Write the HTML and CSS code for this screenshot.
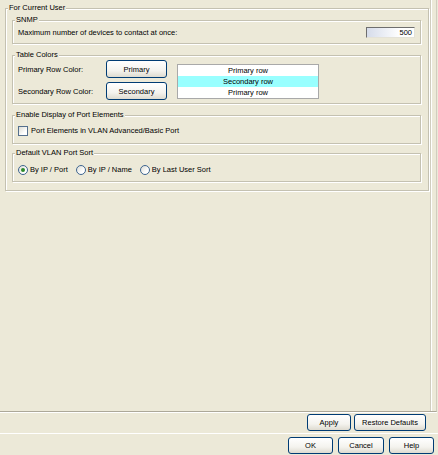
FILE: index.html
```html
<!DOCTYPE html>
<html>
<head>
<meta charset="utf-8">
<link rel="stylesheet" href="styles.css">
</head>
<body>
<div class="main">
  <fieldset class="box outer">
    <legend>For Current User</legend>
    <fieldset class="box group snmp">
      <legend>SNMP</legend>
      <div class="snmp-row">
        <span>Maximum number of devices to contact at once:</span>
        <div class="field">500</div>
      </div>
    </fieldset>
    <fieldset class="box group colors">
      <legend>Table Colors</legend>
      <div class="colors-row">
        <div class="color-grid">
          <span>Primary Row Color:</span>
          <div class="btn btn-color">Primary</div>
          <span>Secondary Row Color:</span>
          <div class="btn btn-color">Secondary</div>
        </div>
        <div class="rows">
          <div class="row">Primary row</div>
          <div class="row secondary">Secondary row</div>
          <div class="row">Primary row</div>
        </div>
      </div>
    </fieldset>
    <fieldset class="box group port">
      <legend>Enable Display of Port Elements</legend>
      <div class="opt-row">
        <span class="chk"></span>
        <span>Port Elements in VLAN Advanced/Basic Port</span>
      </div>
    </fieldset>
    <fieldset class="box group sort">
      <legend>Default VLAN Port Sort</legend>
      <div class="opt-row radios">
        <span class="opt"><span class="radio checked"></span><span>By IP / Port</span></span>
        <span class="opt"><span class="radio"></span><span>By IP / Name</span></span>
        <span class="opt"><span class="radio"></span><span>By Last User Sort</span></span>
      </div>
    </fieldset>
  </fieldset>
</div>
<div class="apply-row">
  <div class="btn btn-apply">Apply</div>
  <div class="btn btn-restore">Restore Defaults</div>
</div>
<div class="sep"></div>
<div class="ok-row">
  <div class="btn btn-dlg">OK</div>
  <div class="btn btn-cancel">Cancel</div>
  <div class="btn btn-dlg">Help</div>
</div>
</body>
</html>
```
FILE: styles.css
```css
html, body {
  margin: 0;
  padding: 0;
}
body {
  width: 438px;
  height: 455px;
  overflow: hidden;
  background: #ECE9D8;
  font-family: "Liberation Sans", Arial, sans-serif;
  font-size: 7.5px;
  color: #000;
}
.main {
  box-sizing: border-box;
  width: 437px;
  height: 412px;
  padding-top: 3px;
  border-bottom: 1px solid #ACA899;
  border-right: 1px solid #D0CDBE;
  box-shadow: 0 1px 0 #fff;
  position: relative;
}
.main::after {
  content: "";
  position: absolute;
  top: 0;
  bottom: 0;
  right: 5px;
  width: 1px;
  background: #D0CDBE;
  box-shadow: 1px 0 0 #fff;
}
.box {
  box-sizing: border-box;
  margin: 0;
  border: 1px solid #C4C1B1;
  box-shadow: inset 1px 1px 0 #fff, 1px 1px 0 #fff;
  min-width: 0;
}
.box > legend {
  padding: 0 1px;
  line-height: 10px;
  background: #ECE9D8;
  white-space: nowrap;
}
.outer {
  margin-left: 5px;
  width: 424px;
  padding: 2px 7px 8px 6px;
}
.outer > legend {
  margin-left: -4px;
}
.group {
  width: 100%;
  padding: 1px 5px 4px 5px;
}
.group > legend {
  margin-left: -3px;
}
.group + .group {
  margin-top: 6px;
}
.snmp-row {
  height: 13px;
  display: flex;
  align-items: center;
  justify-content: space-between;
}
.field {
  box-sizing: border-box;
  width: 49px;
  height: 11px;
  border-top: 1px solid #6E6E6E;
  border-left: 1px solid #6E6E6E;
  border-right: 1px solid #E4E2D8;
  border-bottom: 1px solid #E4E2D8;
  background: linear-gradient(to right, #D6DCEA, #FFFFFF 70%);
  text-align: right;
  padding-right: 2px;
  line-height: 9px;
}
.colors {
  padding-top: 0;
  padding-bottom: 3px;
}
.colors-row {
  display: flex;
  align-items: center;
  gap: 10px;
}
.color-grid {
  display: grid;
  grid-template-columns: 88px 61px;
  row-gap: 4px;
  align-items: center;
}
.btn {
  box-sizing: border-box;
  display: flex;
  align-items: center;
  justify-content: center;
  border: 1px solid #003C74;
  border-radius: 3px;
  background: linear-gradient(#FFFFFF, #F4F3EE 60%, #DEDBD0);
  white-space: nowrap;
}
.btn-color {
  height: 18px;
}
.rows {
  width: 140px;
  border: 1px solid #A9A9A9;
  background: #fff;
  margin-top: 2px;
}
.row {
  height: 11px;
  line-height: 11px;
  text-align: center;
}
.row.secondary {
  background: #99FFFF;
}
.port {
  padding-top: 4px;
  padding-bottom: 6px;
}
.sort {
  padding-top: 5px;
  padding-bottom: 5px;
}
.sort.group {
  margin-top: 4px;
}
.opt-row {
  height: 13px;
  display: flex;
  align-items: center;
  gap: 3px;
}
.radios {
  gap: 8px;
}
.opt {
  display: flex;
  align-items: center;
  gap: 2px;
}
.chk {
  box-sizing: border-box;
  width: 10px;
  height: 10px;
  border: 1px solid #55708E;
  background: linear-gradient(135deg, #DCDCD4, #FFFFFF 70%);
}
.radio {
  box-sizing: border-box;
  width: 10px;
  height: 10px;
  border: 1px solid #3E6590;
  border-radius: 50%;
  background: linear-gradient(135deg, #DCDCD4, #FFFFFF 70%);
  display: flex;
  align-items: center;
  justify-content: center;
}
.radio.checked::before {
  content: "";
  width: 4px;
  height: 4px;
  border-radius: 50%;
  background: #2C8A2C;
}
.apply-row {
  display: flex;
  justify-content: flex-end;
  gap: 3px;
  padding: 1px 12px 0 0;
  margin-top: 1px;
}
.apply-row .btn,
.ok-row .btn {
  height: 17px;
}
.btn-apply { width: 44px; }
.btn-restore { width: 72px; }
.sep {
  height: 1px;
  margin-top: 2px;
  background: #FFFFFF;
}
.ok-row {
  display: flex;
  justify-content: flex-end;
  gap: 5px;
  padding-right: 4px;
  margin-top: 3px;
}
.btn-dlg { width: 45px; }
.btn-cancel { width: 46px; }
```
